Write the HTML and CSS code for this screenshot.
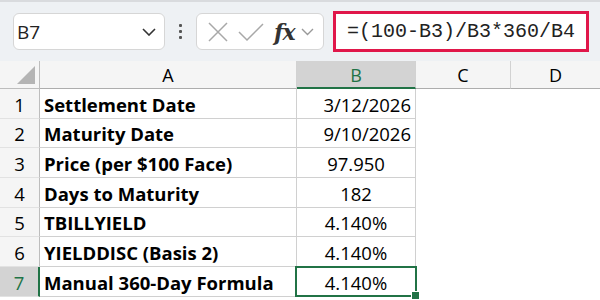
FILE: index.html
```html
<!DOCTYPE html>
<html lang="en">
<head>
  <meta charset="UTF-8" />
  <title>T-Bill Yield</title>
  <link rel="stylesheet" href="styles.css">
</head>
<body>
  <div class="toolbar">
    <div class="name-box">
      <span>B7</span>
      <svg class="chev" width="14" height="8" viewBox="0 0 14 8"><path d="M1 1 L7 7 L13 1" fill="none" stroke="#333" stroke-width="1.6"/></svg>
    </div>
    <div class="dots"><i></i><i></i><i></i></div>
    <div class="fx-box">
      <svg width="22" height="22" viewBox="0 0 22 22"><path d="M2 2 L20 20 M20 2 L2 20" stroke="#a8a8a8" stroke-width="1.5"/></svg>
      <svg width="26" height="20" viewBox="0 0 26 20"><path d="M1 10 L9 18 L25 2" fill="none" stroke="#a8a8a8" stroke-width="1.5"/></svg>
      <span class="fx">fx</span>
      <svg width="13" height="8" viewBox="0 0 13 8"><path d="M1 1 L6.5 6.5 L12 1" fill="none" stroke="#999" stroke-width="1.4"/></svg>
    </div>
    <div class="formula">=(100-B3)/B3*360/B4</div>
  </div>

  <div class="sheet">
    <div class="corner"><span class="tri"></span></div>
    <div class="col-head">A</div>
    <div class="col-head sel">B</div>
    <div class="col-head">C</div>
    <div class="col-head last">D</div>

    <div class="row-head">1</div>
    <div class="cell label">Settlement Date</div>
    <div class="cell value right">3/12/2026</div>
    <div class="blank"></div><div class="blank"></div>

    <div class="row-head">2</div>
    <div class="cell label">Maturity Date</div>
    <div class="cell value right">9/10/2026</div>
    <div class="blank"></div><div class="blank"></div>

    <div class="row-head">3</div>
    <div class="cell label">Price (per $100 Face)</div>
    <div class="cell value">97.950</div>
    <div class="blank"></div><div class="blank"></div>

    <div class="row-head">4</div>
    <div class="cell label">Days to Maturity</div>
    <div class="cell value">182</div>
    <div class="blank"></div><div class="blank"></div>

    <div class="row-head">5</div>
    <div class="cell label">TBILLYIELD</div>
    <div class="cell value">4.140%</div>
    <div class="blank"></div><div class="blank"></div>

    <div class="row-head">6</div>
    <div class="cell label">YIELDDISC (Basis 2)</div>
    <div class="cell value">4.140%</div>
    <div class="blank"></div><div class="blank"></div>

    <div class="row-head sel">7</div>
    <div class="cell label">Manual 360-Day Formula</div>
    <div class="cell value active">4.140%</div>
    <div class="blank"></div><div class="blank"></div>
  </div>
</body>
</html>
```

FILE: styles.css
```css
:root {
  --bar: #eef1f4;
  --head: #f5f5f5;
  --head-sel: #d3d3d3;
  --grid: #d0d0d0;
  --green: #217346;
  --red: #e0174a;
}

* {
  margin: 0;
  padding: 0;
  box-sizing: border-box;
}

body {
  font-family: 'Open Sans', 'Liberation Sans', sans-serif;
  color: #000;
  background: #fff;
  width: 600px;
  height: 300px;
  overflow: hidden;
}

/* formula bar */
.toolbar {
  height: 61px;
  background: var(--bar);
  border-top: 2px solid #d9dbde;
  display: flex;
  align-items: center;
  padding-left: 13px;
}

.name-box {
  width: 152px;
  height: 37px;
  background: #fff;
  border: 1px solid #d6d6d6;
  border-radius: 6px;
  display: flex;
  align-items: center;
  justify-content: space-between;
  padding: 0 8px 0 3px;
  font-size: 19px;
  color: #222;
}

.dots {
  width: 31px;
  display: flex;
  flex-direction: column;
  align-items: center;
  gap: 3px;
}

.dots i {
  width: 3px;
  height: 3px;
  background: #555;
  border-radius: 1px;
}

.fx-box {
  width: 128px;
  height: 37px;
  background: #fff;
  border: 1px solid #d6d6d6;
  border-radius: 6px;
  display: flex;
  align-items: center;
  padding-left: 10px;
}

.fx-box svg:nth-child(2) {
  margin-left: 9px;
}

.fx {
  font-family: 'DejaVu Serif', serif;
  font-style: italic;
  font-weight: bold;
  font-size: 22px;
  color: #333;
  margin-left: 10px;
  margin-right: 6px;
  letter-spacing: -1px;
}

.formula {
  margin-left: 9px;
  width: 256px;
  height: 41px;
  background: #fff;
  border: 3px solid var(--red);
  font-family: 'Liberation Mono', monospace;
  font-size: 20px;
  color: #222;
  display: flex;
  align-items: center;
  padding-left: 11px;
}

/* grid */
.sheet {
  display: grid;
  grid-template-columns: 40px 257px 119px 95px 1fr;
  grid-template-rows: 28px repeat(7, 29.7px);
}

.corner, .col-head, .row-head {
  background: var(--head);
}

.corner {
  position: relative;
  border-right: 1px solid #bdbdbd;
  border-bottom: 1px solid #bdbdbd;
}

.tri {
  position: absolute;
  right: 4px;
  bottom: 4px;
  width: 0;
  height: 0;
  border-left: 18px solid transparent;
  border-bottom: 18px solid #b4b4b4;
}

.col-head {
  display: flex;
  align-items: center;
  justify-content: center;
  font-size: 18px;
  border-right: 1px solid #d2d2d2;
  border-bottom: 1px solid #adadad;
  padding-top: 1px;
}

.col-head.last {
  border-right: none;
}

.col-head.sel {
  background: var(--head-sel);
  color: var(--green);
  border-bottom: 2px solid var(--green);
}

.row-head {
  display: flex;
  align-items: flex-end;
  justify-content: center;
  font-size: 18.5px;
  line-height: 1.3;
  padding-bottom: 1px;
  border-right: 1px solid #bdbdbd;
  border-bottom: 1px solid #e2e2e2;
}

.row-head.sel {
  background: var(--head-sel);
  color: var(--green);
  border-right: 2px solid var(--green);
}

.cell {
  display: flex;
  align-items: flex-end;
  padding: 0 4px 1px;
  font-size: 18.5px;
  line-height: 1.3;
  border-right: 1px solid var(--grid);
  border-bottom: 1px solid var(--grid);
  white-space: nowrap;
}

.label {
  font-weight: bold;
  font-size: 18.5px;
}

.value {
  justify-content: center;
}

.value.right {
  justify-content: flex-end;
  padding-right: 4px;
}

.active {
  position: relative;
}

.active::after {
  content: "";
  position: absolute;
  left: -2px;
  top: -1px;
  right: -2px;
  bottom: -1px;
  border: 2px solid var(--green);
}

.active::before {
  content: "";
  position: absolute;
  right: -5px;
  bottom: -4px;
  width: 7px;
  height: 7px;
  background: var(--green);
  border: 1px solid #fff;
  z-index: 1;
}
```
